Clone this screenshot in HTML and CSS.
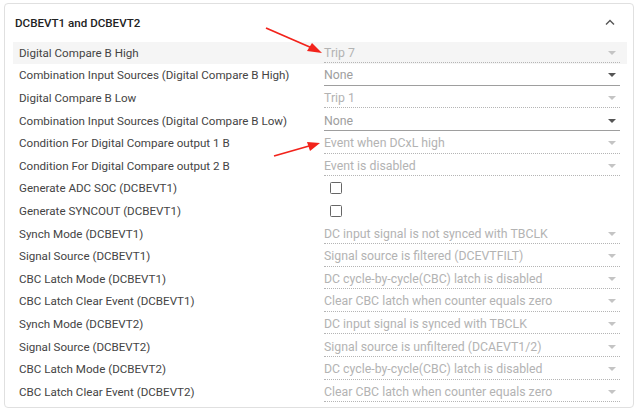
FILE: index.html
```html
<!DOCTYPE html>
<html lang="en">
<head>
    <meta charset="UTF-8">
    <meta name="viewport" content="width=device-width, initial-scale=1.0">
    <title>DCBEVT1 and DCBEVT2</title>
    <link rel="stylesheet" href="styles.css">
</head>
<body>
    <section class="card">
        <header class="card-header">
            <h2>DCBEVT1 and DCBEVT2</h2>
            <svg class="chevron" width="10" height="6" viewBox="0 0 10 6"><path d="M1 5.5 L5 1.5 L9 5.5" fill="none" stroke="#555" stroke-width="1.4"/></svg>
        </header>
        <div class="rows">
            <div class="row active">
                <span class="label">Digital Compare B High</span>
                <div class="select disabled"><span>Trip 7</span><i class="caret"></i></div>
            </div>
            <div class="row">
                <span class="label">Combination Input Sources (Digital Compare B High)</span>
                <div class="select"><span>None</span><i class="caret"></i></div>
            </div>
            <div class="row">
                <span class="label">Digital Compare B Low</span>
                <div class="select disabled"><span>Trip 1</span><i class="caret"></i></div>
            </div>
            <div class="row">
                <span class="label">Combination Input Sources (Digital Compare B Low)</span>
                <div class="select"><span>None</span><i class="caret"></i></div>
            </div>
            <div class="row">
                <span class="label">Condition For Digital Compare output 1 B</span>
                <div class="select disabled"><span>Event when DCxL high</span><i class="caret"></i></div>
            </div>
            <div class="row">
                <span class="label">Condition For Digital Compare output 2 B</span>
                <div class="select disabled"><span>Event is disabled</span><i class="caret"></i></div>
            </div>
            <div class="row">
                <span class="label">Generate ADC SOC (DCBEVT1)</span>
                <div class="check-cell"><span class="checkbox"></span></div>
            </div>
            <div class="row">
                <span class="label">Generate SYNCOUT (DCBEVT1)</span>
                <div class="check-cell"><span class="checkbox"></span></div>
            </div>
            <div class="row">
                <span class="label">Synch Mode (DCBEVT1)</span>
                <div class="select disabled"><span>DC input signal is not synced with TBCLK</span><i class="caret"></i></div>
            </div>
            <div class="row">
                <span class="label">Signal Source (DCBEVT1)</span>
                <div class="select disabled"><span>Signal source is filtered (DCEVTFILT)</span><i class="caret"></i></div>
            </div>
            <div class="row">
                <span class="label">CBC Latch Mode (DCBEVT1)</span>
                <div class="select disabled"><span>DC cycle-by-cycle(CBC) latch is disabled</span><i class="caret"></i></div>
            </div>
            <div class="row">
                <span class="label">CBC Latch Clear Event (DCBEVT1)</span>
                <div class="select disabled"><span>Clear CBC latch when counter equals zero</span><i class="caret"></i></div>
            </div>
            <div class="row">
                <span class="label">Synch Mode (DCBEVT2)</span>
                <div class="select disabled"><span>DC input signal is synced with TBCLK</span><i class="caret"></i></div>
            </div>
            <div class="row">
                <span class="label">Signal Source (DCBEVT2)</span>
                <div class="select disabled"><span>Signal source is unfiltered (DCAEVT1/2)</span><i class="caret"></i></div>
            </div>
            <div class="row">
                <span class="label">CBC Latch Mode (DCBEVT2)</span>
                <div class="select disabled"><span>DC cycle-by-cycle(CBC) latch is disabled</span><i class="caret"></i></div>
            </div>
            <div class="row">
                <span class="label">CBC Latch Clear Event (DCBEVT2)</span>
                <div class="select disabled"><span>Clear CBC latch when counter equals zero</span><i class="caret"></i></div>
            </div>
        </div>
    </section>

    <!-- annotation arrows -->
    <svg class="annotations" width="640" height="412" viewBox="0 0 640 412">
        <g fill="#f2231b" stroke="#f2231b">
            <line x1="266" y1="28" x2="312" y2="48" stroke-width="1.8"/>
            <polygon points="322,53 307,51 312,43" stroke="none"/>
            <line x1="274" y1="156" x2="309" y2="146" stroke-width="1.8"/>
            <polygon points="320,143 310,151 307,142" stroke="none"/>
        </g>
    </svg>
</body>
</html>
```

FILE: styles.css
```css
body {
    font-family: Roboto, "Noto Sans", Arial, sans-serif;
    background-color: #fff;
    color: #333;
    margin: 0;
    padding: 3px 6px 0 4px;
}
.card {
    border: 1px solid #e0e0e0;
    border-radius: 4px;
    padding: 0 6px 5px 8px;
    height: 405px;
    box-sizing: border-box;
}
.card-header {
    display: flex;
    justify-content: space-between;
    align-items: center;
    height: 37.5px;
    padding: 0 12px 0 2px;
}
.card-header h2 {
    margin: 0;
    font-size: 11.6px;
    font-weight: 500;
    color: #222;
}
.chevron {
    margin-top: -2px;
}
.row {
    display: grid;
    grid-template-columns: 305px 1fr;
    align-items: center;
    height: 22.6px;
    padding: 0 7px 0 6px;
}
.row.active {
    background-color: #f5f5f5;
}
.label {
    font-size: 11.6px;
    color: #444;
    white-space: nowrap;
}
.select {
    display: flex;
    justify-content: space-between;
    align-items: center;
    height: 19px;
    margin-top: 1px;
    border-bottom: 1px solid #9e9e9e;
    font-size: 12.3px;
    color: #9e9e9e;
}
.select.disabled {
    border-bottom: 1px dotted #b5b5b5;
    color: #b3b3b3;
}
.caret {
    width: 0;
    height: 0;
    margin-right: 4px;
    border-left: 4px solid transparent;
    border-right: 4px solid transparent;
    border-top: 4px solid #555;
}
.select.disabled .caret {
    border-top-color: #c4c4c4;
}
.check-cell {
    display: flex;
    align-items: center;
    padding-left: 6px;
}
.checkbox {
    width: 10px;
    height: 10px;
    border: 1.5px solid #666;
    border-radius: 1.5px;
}
.annotations {
    position: absolute;
    left: 0;
    top: 0;
    pointer-events: none;
}
```
